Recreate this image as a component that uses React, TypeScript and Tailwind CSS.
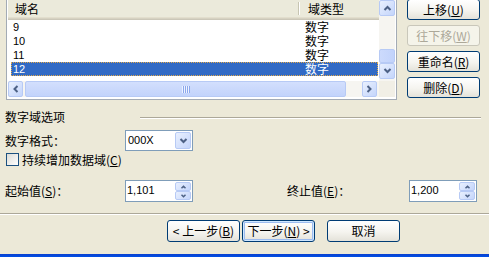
import React from "react";

const CJK = "font-['Noto_Sans_CJK_SC',sans-serif]";
const LAT = "font-['Liberation_Sans',sans-serif]";

type Dir = "up" | "down" | "left" | "right";
const ROT: Record<Dir, string> = { up: "", down: "rotate-180", left: "-rotate-90", right: "rotate-90" };

function Chev({ dir, small = false }: { dir: Dir; small?: boolean }) {
  return (
    <svg
      width={small ? 7 : 9}
      height={small ? 4 : 6}
      viewBox="0 0 9 6"
      className={ROT[dir]}
    >
      <polyline points="1.5,5 4.5,2 7.5,5" fill="none" stroke="#4D6185" strokeWidth={small ? 2.2 : 2} />
    </svg>
  );
}

function SBtn({ dir, cls, small = false }: { dir: Dir; cls: string; small?: boolean }) {
  return (
    <div
      className={`flex items-center justify-center rounded-[2px] border border-[#B7CAF5] bg-[linear-gradient(135deg,#E9F0FE_0%,#C4D5FB_100%)] ${cls}`}
    >
      <Chev dir={dir} small={small} />
    </div>
  );
}

function XPButton({
  children,
  cls,
  variant = "normal",
}: {
  children: React.ReactNode;
  cls: string;
  variant?: "normal" | "default" | "disabled";
}) {
  const v =
    variant === "disabled"
      ? "border-[#C9C7BA] bg-[#F5F4EA] text-[#ACA899]"
      : variant === "default"
      ? "border-[#003C74] bg-[linear-gradient(180deg,#FFFFFF_0%,#F5F4EF_55%,#E4E2D9_100%)] text-black shadow-[inset_0_0_0_1px_#CEE7FF,inset_0_0_0_2px_#9DBCEF]"
      : "border-[#003C74] bg-[linear-gradient(180deg,#FFFFFF_0%,#F5F4EF_55%,#E4E2D9_100%)] text-black";
  return (
    <div className={`flex items-center justify-center rounded-[3px] border text-[12px] leading-none ${v} ${cls}`}>
      {children}
    </div>
  );
}

function U({ c }: { c: string }) {
  return <span className="underline underline-offset-1">{c}</span>;
}

function Row({ name, selected = false }: { name: string; selected?: boolean }) {
  return (
    <div
      className={`ml-[3px] flex h-[14px] w-[367px] items-center border pl-px ${
        selected ? "border-dotted border-[#E2A94A] bg-[#316AC5] text-white" : "border-transparent text-black"
      }`}
    >
      <div className={`w-[287px] ${LAT} text-[11px] leading-none`}>{name}</div>
      <div className={`pl-[5px] ${CJK} text-[12px] leading-[12px]`}>数字</div>
    </div>
  );
}

function Spin({ value }: { value: string }) {
  return (
    <div className="flex h-[22px] w-[68px] border border-[#7F9DB9] bg-white">
      <div className={`flex-1 pl-px pt-[3px] ${LAT} text-[11px] leading-[13px] text-black`}>{value}</div>
      <div className="my-px mr-px flex w-[16px] flex-col">
        <SBtn dir="up" cls="h-[10px] w-[16px]" small />
        <SBtn dir="down" cls="h-[10px] w-[16px]" small />
      </div>
    </div>
  );
}

export default function App() {
  return (
    <div className={`flex h-[257px] w-[489px] flex-col overflow-hidden bg-[#ECE9D8] ${CJK} text-[12px] text-black`}>
      {/* top: list + side buttons */}
      <div className="flex h-[100px] shrink-0">
        <div className="ml-[6px] flex h-[100px] w-[391px] flex-col border-x border-b border-[#A3ABB5] bg-white px-px pb-[2px]">
          <div className="flex h-[81px]">
            <div className="flex w-[371px] flex-col">
              {/* header */}
              <div className="flex h-[20px] items-center bg-[#EBEADB] pb-[3px] shadow-[inset_0_-1px_0_#CBC7B8,inset_0_-2px_0_#D6D2C2,inset_0_-3px_0_#E2DECD]">
                <div className="w-[290px] pl-[7px] leading-none">域名</div>
                <div className="h-[13px] w-px bg-[#C7C5B2]" />
                <div className="h-[13px] w-px bg-white" />
                <div className="pl-[8px] leading-none">域类型</div>
              </div>
              <Row name="9" />
              <Row name="10" />
              <Row name="11" />
              <Row name="12" selected />
            </div>
            {/* vertical scrollbar */}
            <div className="flex w-[16px] flex-col bg-[#F6F5F1]">
              <SBtn dir="up" cls="h-[16px] w-[16px]" />
              <div className="h-[33px]" />
              <div className="h-[14px] w-[16px] rounded-[2px] border border-[#B7CAF5] bg-[linear-gradient(90deg,#CCDAFC_0%,#C2D3FB_100%)]" />
              <SBtn dir="down" cls="h-[16px] w-[16px]" />
            </div>
          </div>
          {/* horizontal scrollbar */}
          <div className="flex h-[16px]">
            <div className="flex w-[371px] bg-[#F6F5F1]">
              <SBtn dir="left" cls="h-[16px] w-[15px]" />
              <div className="w-[2px]" />
              <div className="flex h-[16px] w-[321px] items-center justify-center rounded-[2px] border border-[#B7CAF5] bg-[linear-gradient(180deg,#D3DFFD_0%,#C2D3FB_100%)]">
                <svg width="8" height="7" viewBox="0 0 8 7">
                  <rect x="0" y="0" width="1" height="7" fill="#EEF3FF" />
                  <rect x="1" y="0" width="1" height="7" fill="#8CA8EC" />
                  <rect x="2" y="0" width="1" height="7" fill="#EEF3FF" />
                  <rect x="3" y="0" width="1" height="7" fill="#8CA8EC" />
                  <rect x="4" y="0" width="1" height="7" fill="#EEF3FF" />
                  <rect x="5" y="0" width="1" height="7" fill="#8CA8EC" />
                  <rect x="6" y="0" width="1" height="7" fill="#EEF3FF" />
                  <rect x="7" y="0" width="1" height="7" fill="#8CA8EC" />
                </svg>
              </div>
              <div className="w-[16px]" />
              <SBtn dir="right" cls="h-[16px] w-[15px]" />
            </div>
            <div className="w-[16px] bg-[#F1EFE6]" />
          </div>
        </div>
        {/* side buttons */}
        <div className="-mt-px ml-[10px] flex w-[73px] flex-col gap-[5px]">
          <XPButton cls="h-[21px]">
            上移(<U c="U" />)
          </XPButton>
          <XPButton cls="h-[21px]" variant="disabled">
            往下移(<U c="W" />)
          </XPButton>
          <XPButton cls="h-[21px]">
            重命名(<U c="R" />)
          </XPButton>
          <XPButton cls="h-[21px]">
            删除(<U c="D" />)
          </XPButton>
        </div>
      </div>

      {/* section title */}
      <div className="mt-[9px] flex h-[16px] items-center pl-[5px]">
        <span className="leading-none">数字域选项</span>
        <div className="ml-auto mr-[8px] mt-[8px] h-[2px] w-[341px] self-start border-t border-b border-t-[#ACA899] border-b-white" />
      </div>

      {/* number format */}
      <div className="mt-[5px] flex h-[21px] items-center pl-[5px]">
        <div className="w-[120px] leading-none">数字格式：</div>
        <div className="flex h-[21px] w-[68px] border border-[#7F9DB9] bg-white">
          <div className={`flex flex-1 items-center pl-[2px] ${LAT} text-[11px] leading-none`}>000X</div>
          <SBtn dir="down" cls="my-px mr-px w-[16px]" />
        </div>
      </div>

      {/* checkbox */}
      <div className="mt-[2px] flex h-[13px] items-center pl-[6px]">
        <div className="h-[13px] w-[13px] border border-[#1C5180] bg-[linear-gradient(135deg,#DCDCD7_0%,#FFFFFF_100%)]" />
        <span className="ml-[3px] leading-none">
          持续增加数据域(<U c="C" />)
        </span>
      </div>

      {/* start / end values */}
      <div className="mt-[14px] flex h-[22px] items-center pl-[5px]">
        <div className="w-[120px] leading-none">
          起始值(<U c="S" />)：
        </div>
        <Spin value="1,101" />
        <div className="ml-auto w-[122px] leading-none">
          终止值(<U c="E" />)：
        </div>
        <div className="mr-[12px]">
          <Spin value="1,200" />
        </div>
      </div>

      {/* separator */}
      <div className="mt-[11px] h-[2px] w-full border-t border-b border-t-[#ACA899] border-b-white" />

      {/* bottom buttons */}
      <div className="mt-[5px] flex pl-[167px]">
        <XPButton cls="h-[22px] w-[73px]">
          &lt; 上一步(<U c="B" />)
        </XPButton>
        <XPButton cls="ml-[2px] h-[22px] w-[73px]" variant="default">
          下一步(<U c="N" />) &gt;
        </XPButton>
        <XPButton cls="ml-[12px] h-[22px] w-[73px]">取消</XPButton>
      </div>

      <div className="mt-auto h-[3px] w-full bg-[linear-gradient(180deg,#0A3FCC_0%,#0050E8_100%)]" />
    </div>
  );
}
